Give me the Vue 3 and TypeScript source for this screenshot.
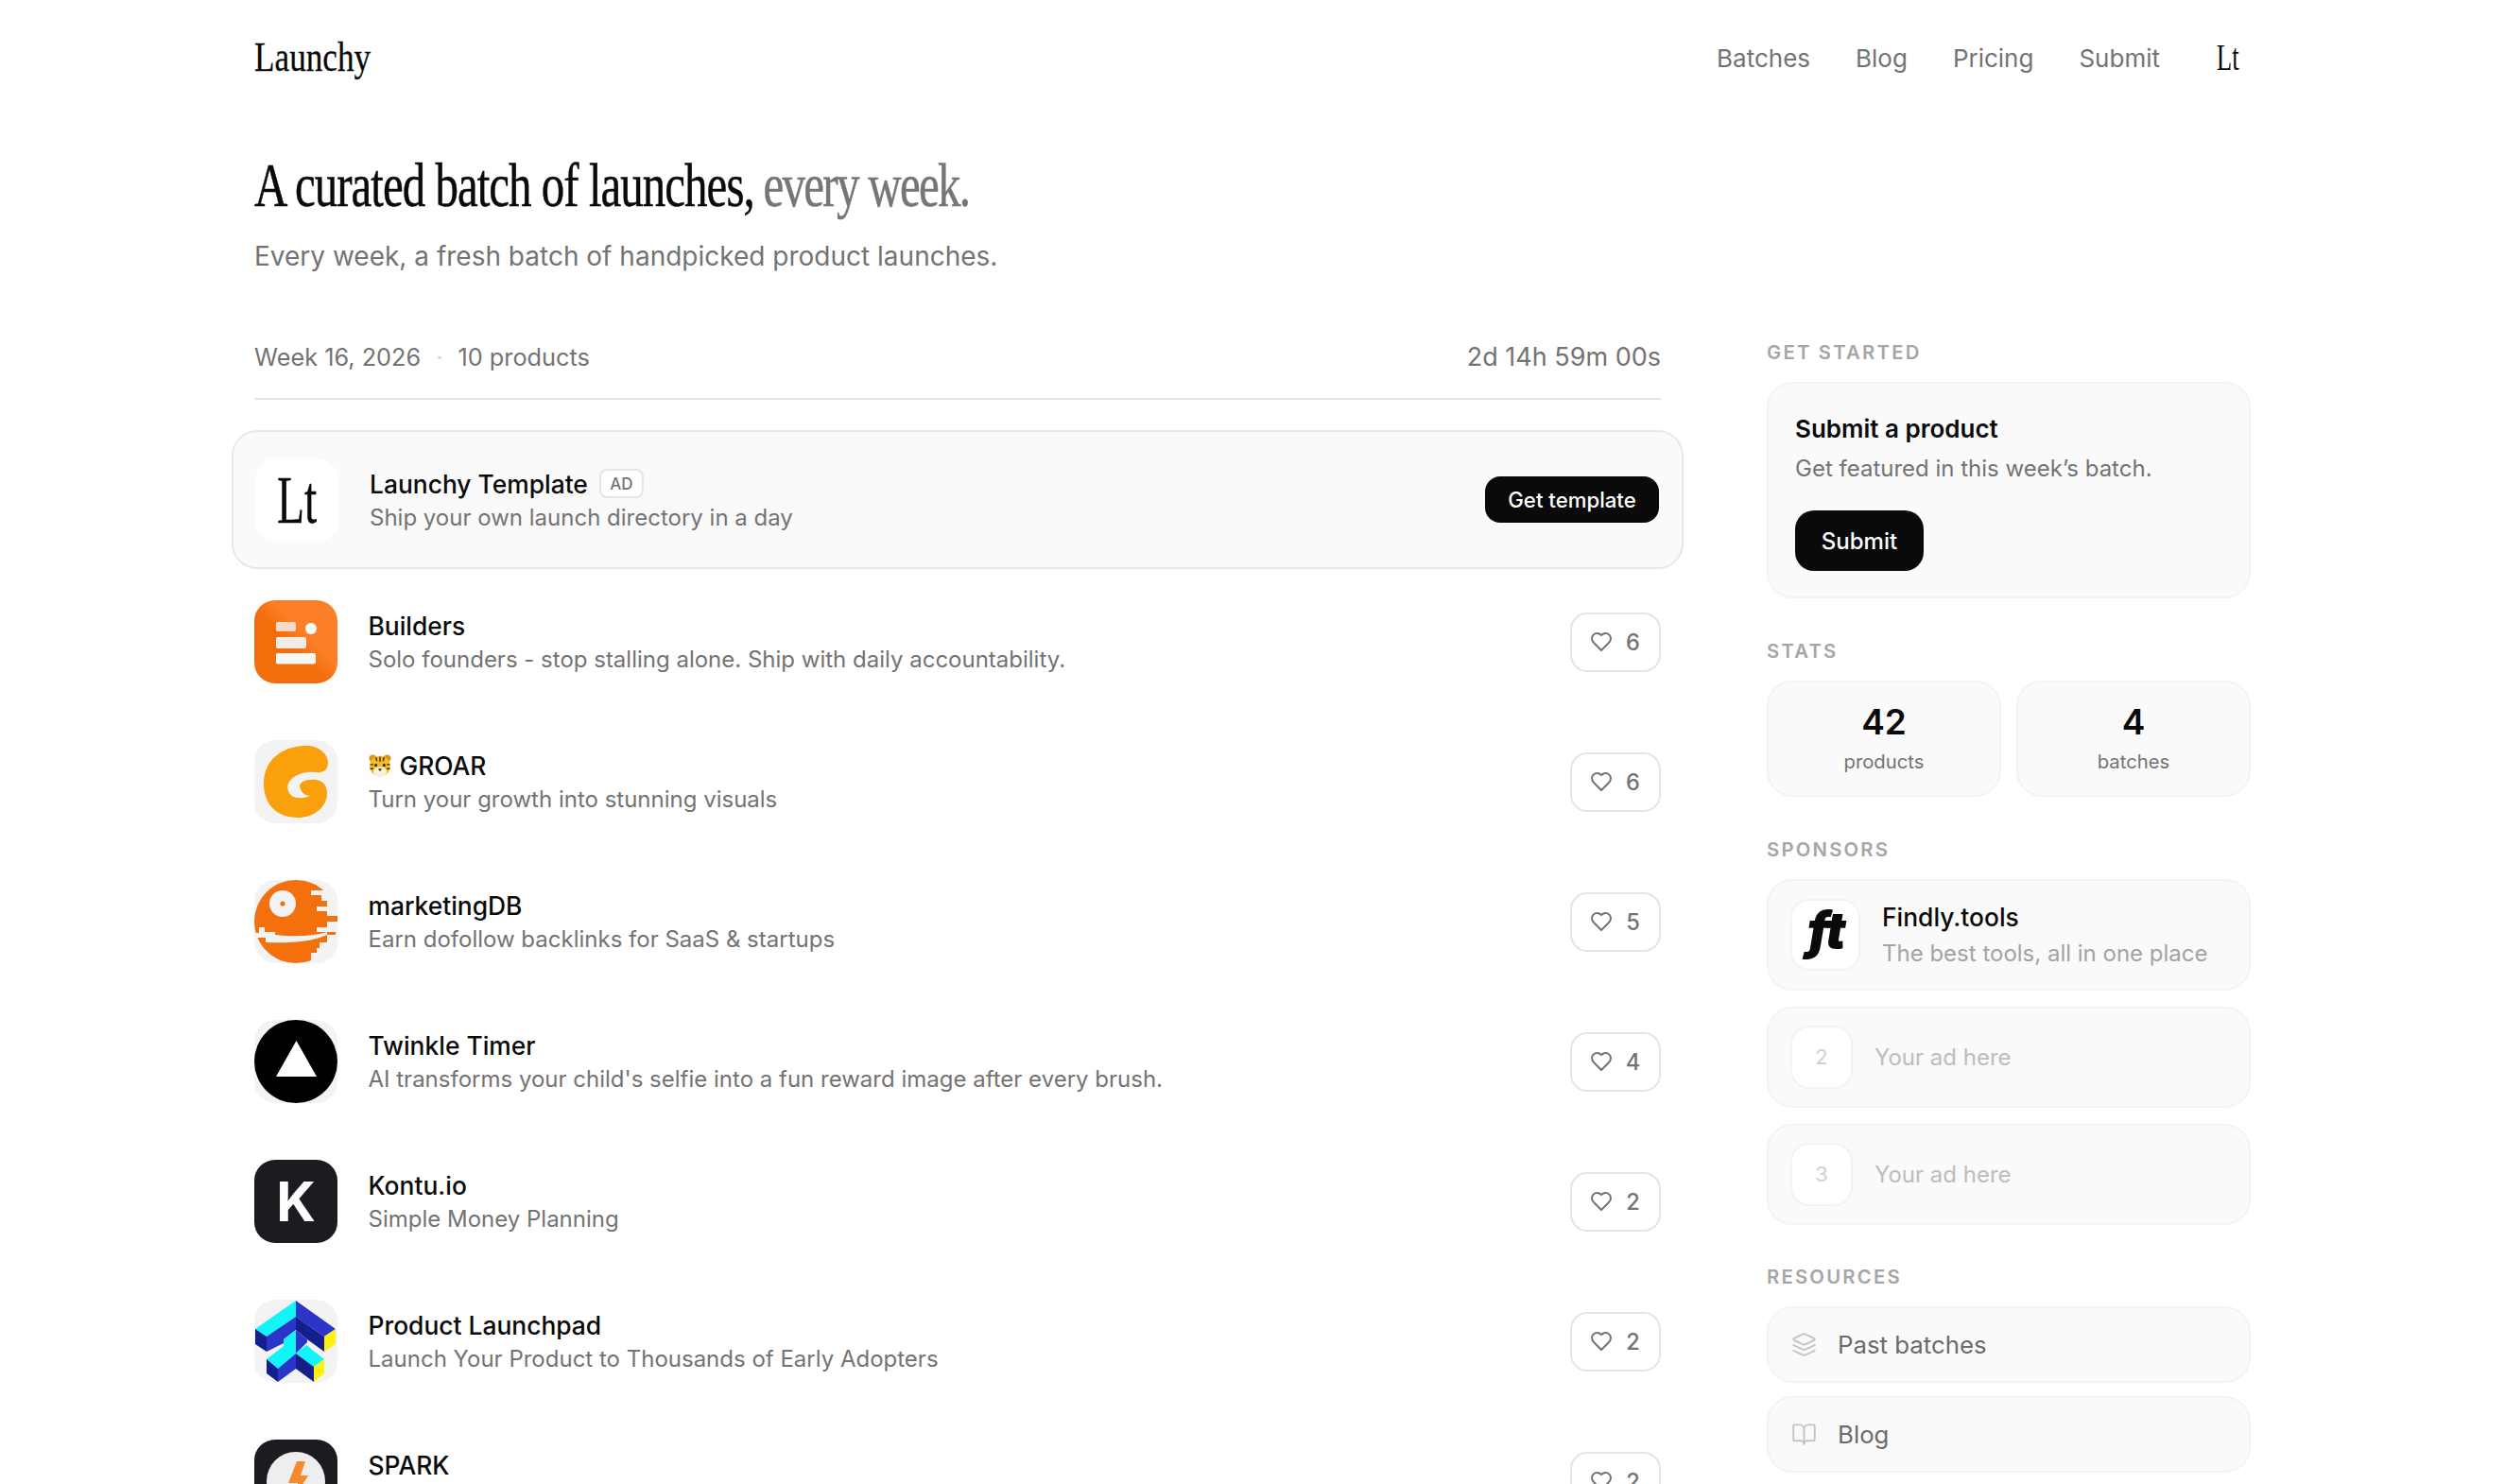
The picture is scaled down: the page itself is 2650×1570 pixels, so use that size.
<script setup lang="ts">
interface Product {
  icon: string
  name: string
  desc: string
  likes: number
}

const products: Product[] = [
  { icon: 'builders', name: 'Builders', desc: 'Solo founders - stop stalling alone. Ship with daily accountability.', likes: 6 },
  { icon: 'groar', name: 'GROAR', desc: 'Turn your growth into stunning visuals', likes: 6 },
  { icon: 'mdb', name: 'marketingDB', desc: 'Earn dofollow backlinks for SaaS & startups', likes: 5 },
  { icon: 'twinkle', name: 'Twinkle Timer', desc: "AI transforms your child's selfie into a fun reward image after every brush.", likes: 4 },
  { icon: 'kontu', name: 'Kontu.io', desc: 'Simple Money Planning', likes: 2 },
  { icon: 'launchpad', name: 'Product Launchpad', desc: 'Launch Your Product to Thousands of Early Adopters', likes: 2 },
  { icon: 'spark', name: 'SPARK', desc: '\u00a0', likes: 2 },
]

const navLinks = ['Batches', 'Blog', 'Pricing', 'Submit']
const adSlots = [2, 3]
</script>

<template>
  <div class="page">
    <header class="top">
      <a class="logo"><span class="squeeze">Launchy</span></a>
      <nav class="nav">
        <a v-for="l in navLinks" :key="l" class="nav-link">{{ l }}</a>
        <span class="nav-lt"><span class="lt-text">Lt</span></span>
      </nav>
    </header>

    <section class="hero">
      <h1 class="headline"><span class="squeeze">A curated batch of launches, <em>every week.</em></span></h1>
      <p class="lede">Every week, a fresh batch of handpicked product launches.</p>
    </section>

    <div class="columns">
      <main class="main">
        <div class="meta">
          <div class="meta-left">
            <span>Week 16, 2026</span>
            <span class="dot">·</span>
            <span>10 products</span>
          </div>
          <span class="timer">2d 14h 59m 00s</span>
        </div>

        <div class="ad">
          <div class="ad-icon"><span class="lt-big">Lt</span></div>
          <div class="text">
            <div class="name">Launchy Template <span class="badge">AD</span></div>
            <div class="desc">Ship your own launch directory in a day</div>
          </div>
          <button class="btn-small">Get template</button>
        </div>

        <div class="list">
          <div v-for="p in products" :key="p.name" class="row">
            <div class="icon">
              <svg v-if="p.icon === 'builders'" viewBox="0 0 88 88" width="88" height="88">
                <defs>
                  <linearGradient id="bg-orange" x1="0" y1="1" x2="1" y2="0">
                    <stop offset="0.45" stop-color="#f26e0d" />
                    <stop offset="0.6" stop-color="#fb7f26" />
                  </linearGradient>
                </defs>
                <rect width="88" height="88" fill="url(#bg-orange)" />
                <rect x="23" y="23" width="21" height="10" rx="2" fill="#f6dcc8" />
                <circle cx="60" cy="30" r="6" fill="#fff" />
                <rect x="23" y="39" width="32" height="12" rx="2" fill="#f0ede9" />
                <rect x="23" y="56" width="42" height="11.5" rx="2" fill="#f7f7f7" />
              </svg>

              <svg v-else-if="p.icon === 'groar'" viewBox="0 0 88 88" width="88" height="88">
                <rect width="88" height="88" fill="#f3f3f3" />
                <path fill="#f9a00c" d="M53 6C66 5 78 13 78 24C78 32 72 35 66 34C58 33 49 34 42 39C36 43 34 48 36 54C38 60 46 64 59 59C53 59 48 54 48 48C50 43 55 42 60 42C70 41 77 46 77 56C77 72 62 82 46 82C24 82 10 68 10 46C10 22 28 7 53 6Z" />
              </svg>

              <svg v-else-if="p.icon === 'mdb'" viewBox="0 0 88 88" width="88" height="88">
                <rect width="88" height="88" fill="#f3f3f3" />
                <circle cx="44" cy="44" r="44" fill="#f4700d" />
                <g fill="#f3f3f3">
                  <rect x="60" y="11" width="28" height="5" />
                  <rect x="71" y="16" width="17" height="6" />
                  <rect x="77" y="22" width="11" height="6" />
                  <rect x="66" y="28" width="22" height="5" />
                  <rect x="77" y="33" width="11" height="5" />
                  <rect x="77" y="44" width="11" height="6" />
                  <rect x="66" y="50" width="22" height="5" />
                  <rect x="77" y="58" width="11" height="8" />
                  <rect x="69" y="66" width="19" height="6" />
                  <rect x="66" y="72" width="22" height="5" />
                  <rect x="60" y="77" width="28" height="11" />
                  <circle cx="30" cy="25" r="14" />
                  <path d="M5 50H11V55H22V58C40 60 60 60 77 55V58C62 65 40 67 12 66V61H1V56H5Z" />
                </g>
                <rect x="77" y="38" width="11" height="6" fill="#f4700d" />
                <circle cx="30" cy="25" r="2.6" fill="#f4700d" />
              </svg>

              <svg v-else-if="p.icon === 'twinkle'" viewBox="0 0 88 88" width="88" height="88">
                <rect width="88" height="88" fill="#f3f3f3" />
                <circle cx="44" cy="44" r="44" fill="#000" />
                <polygon points="44.5,22 23,60 66,60" fill="#fff" />
              </svg>

              <div v-else-if="p.icon === 'kontu'" class="kontu">K</div>

              <svg v-else-if="p.icon === 'launchpad'" viewBox="0 0 88 88" width="88" height="88">
                <rect width="88" height="88" fill="#f3f3f3" />
                <polygon points="44,1 1,31 13,39 44,18" fill="#12f5f8" />
                <polygon points="44,1 86,31 74,39 44,18" fill="#2b35c8" />
                <polygon points="1,31 13,39 13,55 1,47" fill="#141f8c" />
                <polygon points="13,39 44,18 44,32 31,42 31,46 13,55" fill="#2b35c8" />
                <polygon points="44,18 74,39 74,55 56,42 44,32" fill="#141f8c" />
                <polygon points="74,39 86,31 86,47 74,55" fill="#fef00f" />
                <polygon points="44,32 56,42 56,45 44,57" fill="#2b35c8" />
                <polygon points="44,32 31,42 31,49 13,63 25,73 44,57" fill="#12f5f8" />
                <polygon points="55,48 74,63 63,71 44,57" fill="#12f5f8" />
                <polygon points="13,63 25,73 25,87 13,78" fill="#141f8c" />
                <polygon points="25,73 44,57 44,73 25,87" fill="#2b35c8" />
                <polygon points="44,57 63,71 63,87 44,73" fill="#141f8c" />
                <polygon points="63,71 74,63 74,78 63,87" fill="#fef00f" />
              </svg>

              <svg v-else viewBox="0 0 88 88" width="88" height="88">
                <rect width="88" height="88" fill="#1b1c1f" />
                <circle cx="44" cy="44" r="31" fill="#eeeeee" />
                <polygon points="45,23 54,23 49,38 57,38 42,62 46,46 36,46" fill="#f58a2c" />
              </svg>
            </div>

            <div class="text">
              <div class="name">
                <svg v-if="p.icon === 'groar'" class="tiger" viewBox="0 0 22 22" width="24" height="24">
                  <circle cx="4" cy="4" r="3.5" fill="#d9960f" />
                  <circle cx="18" cy="4" r="3.5" fill="#d9960f" />
                  <ellipse cx="11" cy="11.5" rx="10" ry="10" fill="#f5bd24" />
                  <ellipse cx="11" cy="17" rx="6.5" ry="4.8" fill="#f5f0e0" />
                  <path d="M11 2.5v4.5M7 3l1 3.5M15 3l-1 3.5M1.5 10h3M1.5 14h3M20.500 10h-3M20.500 14h-3" stroke="#3a2a10" stroke-width="1.3" />
                  <circle cx="7" cy="10.500" r="1.4" fill="#222" />
                  <circle cx="15" cy="10.500" r="1.4" fill="#222" />
                  <path d="M9 14h4L11 16.500Z" fill="#3a2a10" />
                </svg>
                {{ p.name }}
              </div>
              <div class="desc">{{ p.desc }}</div>
            </div>

            <button class="like">
              <svg viewBox="0 0 24 24" width="24" height="24" fill="none" stroke="currentColor" stroke-width="2" stroke-linecap="round" stroke-linejoin="round">
                <path d="M19 14c1.49-1.46 3-3.21 3-5.5A5.5 5.5 0 0 0 16.5 3c-1.76 0-3 .5-4.5 2-1.5-1.5-2.74-2-4.5-2A5.5 5.5 0 0 0 2 8.5c0 2.3 1.5 4.05 3 5.5l7 7Z" />
              </svg>
              <span>{{ p.likes }}</span>
            </button>
          </div>
        </div>
      </main>

      <aside class="side">
        <section class="block">
          <h3 class="label">GET STARTED</h3>
          <div class="card submit">
            <div class="submit-title">Submit a product</div>
            <div class="submit-desc">Get featured in this week’s batch.</div>
            <button class="btn-big">Submit</button>
          </div>
        </section>

        <section class="block">
          <h3 class="label">STATS</h3>
          <div class="stats">
            <div class="card stat">
              <div class="stat-num">42</div>
              <div class="stat-cap">products</div>
            </div>
            <div class="card stat">
              <div class="stat-num">4</div>
              <div class="stat-cap">batches</div>
            </div>
          </div>
        </section>

        <section class="block">
          <h3 class="label">SPONSORS</h3>
          <div class="stack">
            <div class="card sponsor">
              <div class="sp-icon"><span class="ft">ft</span></div>
              <div class="sp-text">
                <div class="sp-name">Findly.tools</div>
                <div class="sp-desc">The best tools, all in one place</div>
              </div>
            </div>
            <div v-for="n in adSlots" :key="n" class="card slot">
              <div class="slot-num">{{ n }}</div>
              <div class="slot-text">Your ad here</div>
            </div>
          </div>
        </section>

        <section class="block">
          <h3 class="label">RESOURCES</h3>
          <div class="links">
            <a class="card res">
              <svg viewBox="0 0 24 24" width="27" height="27" fill="none" stroke="currentColor" stroke-width="1.7" stroke-linecap="round" stroke-linejoin="round">
                <path d="m12.83 2.18a2 2 0 0 0-1.66 0L2.6 6.08a1 1 0 0 0 0 1.83l8.58 3.91a2 2 0 0 0 1.66 0l8.58-3.9a1 1 0 0 0 0-1.83Z" />
                <path d="m22 17.65-9.17 4.16a2 2 0 0 1-1.66 0L2 17.65" />
                <path d="m22 12.65-9.17 4.16a2 2 0 0 1-1.66 0L2 12.65" />
              </svg>
              <span>Past batches</span>
            </a>
            <a class="card res">
              <svg viewBox="0 0 24 24" width="27" height="27" fill="none" stroke="currentColor" stroke-width="1.7" stroke-linecap="round" stroke-linejoin="round">
                <path d="M12 7v14" />
                <path d="M3 18a1 1 0 0 1-1-1V4a1 1 0 0 1 1-1h5a4 4 0 0 1 4 4 4 4 0 0 1 4-4h5a1 1 0 0 1 1 1v13a1 1 0 0 1-1 1h-6a3 3 0 0 0-3 3 3 3 0 0 0-3-3z" />
              </svg>
              <span>Blog</span>
            </a>
          </div>
        </section>
      </aside>
    </div>
  </div>
</template>

<style>
html, body {
  margin: 0;
  height: 1570px;
  background: #fff;
  overflow: hidden;
}
</style>

<style scoped>
.page {
  width: 2112px;
  margin: 0 0 0 269px;
  font-family: Inter, "Liberation Sans", sans-serif;
  color: #0a0a0a;
}
.top {
  height: 122px;
  display: flex;
  align-items: center;
  justify-content: space-between;
}
.logo {
  font-family: "Liberation Serif", serif;
  font-size: 44px;
  line-height: 1;
  color: #0a0a0a;
  -webkit-text-stroke: 0.3px #0a0a0a;
}
.squeeze {
  display: inline-block;
  white-space: nowrap;
  transform-origin: left center;
}
.logo .squeeze {
  transform: scaleX(0.8);
}
.nav {
  display: flex;
  align-items: center;
  gap: 48px;
}
.nav-link {
  font-size: 26px;
  color: #737373;
}
.nav-lt {
  width: 48px;
  display: flex;
  justify-content: center;
}
.lt-text {
  display: inline-block;
  font-family: "Liberation Serif", serif;
  font-size: 40px;
  line-height: 1;
  color: #0a0a0a;
  transform: scaleX(0.67);
}
.hero {
  height: 238px;
}
.headline {
  margin: 0;
  padding-top: 39px;
  height: 70px;
  font-family: "Liberation Serif", serif;
  font-weight: 400;
  font-size: 66px;
  line-height: 70px;
  letter-spacing: -0.02em;
  -webkit-text-stroke: 0.5px currentColor;
}
.headline .squeeze {
  transform: scaleX(0.742);
}
.headline em {
  font-style: normal;
  color: #767676;
  letter-spacing: -2.3px;
  margin-left: -2px;
}
.lede {
  margin: 20px 0 0;
  font-size: 28px;
  line-height: 40px;
  color: #737373;
}
.columns {
  display: grid;
  grid-template-columns: 1488px 512px;
  column-gap: 112px;
}
.meta {
  height: 61px;
  display: flex;
  align-items: flex-start;
  justify-content: space-between;
  border-bottom: 2px solid #e5e5e5;
  color: #737373;
  font-size: 25.3px;
  line-height: 36px;
}
.meta-left {
  display: flex;
  align-items: center;
  gap: 16px;
}
.dot {
  color: #d4d4d4;
}
.timer {
  font-size: 27px;
}
.ad {
  margin: 32px -24px 0 -24px;
  height: 147px;
  box-sizing: border-box;
  padding: 0 24px 0 23px;
  display: flex;
  align-items: center;
  gap: 33px;
  background: #fafafa;
  border: 2px solid #e8e8e8;
  border-radius: 27px;
}
.ad-icon {
  width: 88px;
  height: 88px;
  flex: none;
  background: #fff;
  border-radius: 22px;
  display: flex;
  align-items: center;
  justify-content: center;
}
.lt-big {
  display: inline-block;
  font-family: "Liberation Serif", serif;
  font-size: 72px;
  line-height: 1;
  transform: scaleX(0.66);
  -webkit-text-stroke: 0.4px #0a0a0a;
}
.text {
  flex: 1;
  min-width: 0;
  padding-top: 2px;
}
.name {
  font-size: 26.4px;
  font-weight: 500;
  line-height: 36px;
  display: flex;
  align-items: center;
  gap: 10px;
}
.tiger {
  flex: none;
  margin-right: -1px;
}
.badge {
  margin-left: 2px;
  box-sizing: border-box;
  width: 47px;
  height: 31px;
  border: 2px solid #e5e5e5;
  border-radius: 8px;
  background: #fff;
  font-size: 17px;
  font-weight: 500;
  color: #737373;
  display: flex;
  align-items: center;
  justify-content: center;
}
.desc {
  font-size: 24px;
  line-height: 36px;
  color: #737373;
}
.btn-small {
  width: 184px;
  height: 49px;
  border: 0;
  border-radius: 16px;
  background: #0a0a0a;
  color: #fff;
  font-family: inherit;
  font-size: 22.2px;
  font-weight: 500;
}
.list {
  margin-top: 3px;
}
.row {
  height: 148px;
  display: flex;
  align-items: center;
  gap: 32.5px;
}
.icon {
  width: 88px;
  height: 88px;
  flex: none;
  border-radius: 22px;
  overflow: hidden;
}
.icon svg {
  display: block;
}
.kontu {
  width: 100%;
  height: 100%;
  background: #1b1c1f;
  color: #fff;
  display: flex;
  align-items: center;
  justify-content: center;
  font-size: 58px;
  font-weight: 700;
  line-height: 1;
}
.like {
  width: 96px;
  height: 63px;
  flex: none;
  box-sizing: border-box;
  margin-right: 0.5px;
  border: 2px solid #e5e5e5;
  border-radius: 18px;
  background: #fff;
  color: #737373;
  font-family: inherit;
  font-size: 23.66px;
  font-weight: 500;
  display: flex;
  align-items: center;
  justify-content: center;
  gap: 14px;
  padding: 0;
}
.side {
  display: flex;
  flex-direction: column;
  gap: 42.5px;
}
.label {
  margin: 0 0 18px;
  font-size: 20.28px;
  line-height: 26px;
  font-weight: 600;
  letter-spacing: 0.11em;
  color: #a6a6a6;
}
.card {
  box-sizing: border-box;
  background: #fafafa;
  border: 2px solid #f3f3f3;
  border-radius: 27px;
}
.submit {
  height: 229px;
  padding: 28px 28px 0;
}
.submit-title {
  font-size: 26px;
  font-weight: 600;
  line-height: 40px;
}
.submit-desc {
  margin-top: 2px;
  font-size: 24px;
  line-height: 40px;
  color: #737373;
}
.btn-big {
  display: block;
  margin-top: 24px;
  width: 136px;
  height: 64px;
  border: 0;
  border-radius: 20px;
  background: #0a0a0a;
  color: #fff;
  font-family: inherit;
  font-size: 24px;
  font-weight: 500;
}
.stats {
  display: grid;
  grid-template-columns: 1fr 1fr;
  gap: 16px;
}
.stat {
  height: 123.5px;
  display: flex;
  flex-direction: column;
  align-items: center;
  justify-content: center;
}
.stat-num {
  font-size: 37px;
  font-weight: 600;
  line-height: 44px;
}
.stat-cap {
  margin-top: 6px;
  font-size: 20.28px;
  line-height: 28px;
  color: #737373;
}
.stack {
  display: flex;
  flex-direction: column;
  gap: 17px;
}
.sponsor {
  height: 118px;
  padding: 0 23px;
  display: flex;
  align-items: center;
  gap: 23px;
}
.sp-icon {
  width: 74px;
  height: 76px;
  flex: none;
  box-sizing: border-box;
  padding-bottom: 10px;
  background: #fff;
  border: 2px solid #f3f3f3;
  border-radius: 20px;
  display: flex;
  align-items: center;
  justify-content: center;
}
.ft {
  font-family: Inter, sans-serif;
  font-style: italic;
  font-weight: 900;
  font-size: 54px;
  line-height: 1;
  letter-spacing: -0.04em;
}
.sp-text {
  padding-top: 2px;
}
.sp-name {
  font-size: 26.4px;
  font-weight: 500;
  line-height: 36px;
}
.sp-desc {
  margin-top: 3px;
  font-size: 24px;
  line-height: 36px;
  color: #a3a3a3;
}
.slot {
  height: 107px;
  padding: 0 23px;
  display: flex;
  align-items: center;
  gap: 23px;
}
.slot-num {
  width: 66px;
  height: 67px;
  box-sizing: border-box;
  background: #fff;
  border: 2px solid #f3f3f3;
  border-radius: 20px;
  display: flex;
  align-items: center;
  justify-content: center;
  font-size: 22px;
  color: #d0d0d0;
}
.slot-text {
  font-size: 24px;
  color: #bdbdbd;
}
.links {
  display: flex;
  flex-direction: column;
  gap: 14px;
}
.res {
  height: 81px;
  padding: 0 24px;
  display: flex;
  align-items: center;
  gap: 22px;
  font-size: 25.8px;
  color: #6b6b6b;
}
.res svg {
  color: #c4c4c4;
  flex: none;
}
</style>
